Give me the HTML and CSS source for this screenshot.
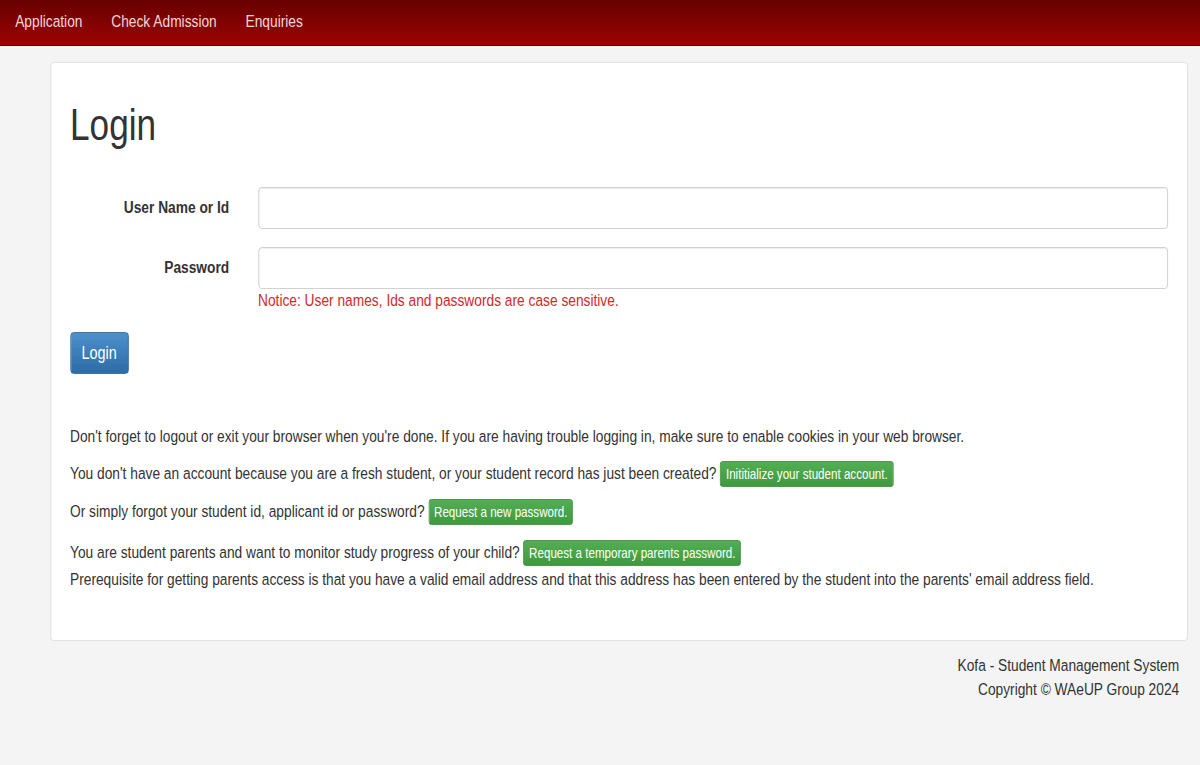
FILE: index.html
```html
<!DOCTYPE html>
<html>
<head>
<meta charset="utf-8">
<link rel="stylesheet" href="styles.css">
</head>
<body>
<div class="frame">
<div class="stage">
<nav class="topnav">
  <a class="nav-item" href="#">Application</a>
  <a class="nav-item" href="#">Check Admission</a>
  <a class="nav-item" href="#">Enquiries</a>
</nav>
<main class="panel">
  <h1 class="title">Login</h1>
  <form class="form">
    <div class="row">
      <label class="label">User Name or Id</label>
      <div class="field"><input class="input" type="text"></div>
    </div>
    <div class="row last">
      <label class="label">Password</label>
      <div class="field">
        <input class="input" type="password">
        <div class="notice">Notice: User names, Ids and passwords are case sensitive.</div>
      </div>
    </div>
    <button class="btn-login" type="button">Login</button>
  </form>
  <div class="info">
    <p class="line">Don't forget to logout or exit your browser when you're done. If you are having trouble logging in, make sure to enable cookies in your web browser.</p>
    <p class="line">You don't have an account because you are a fresh student, or your student record has just been created? <a class="btn-green" href="#">Inititialize your student account.</a></p>
    <p class="line wide">Or simply forgot your student id, applicant id or password? <a class="btn-green" href="#">Request a new password.</a></p>
    <p class="line">You are student parents and want to monitor study progress of your child? <a class="btn-green" href="#">Request a temporary parents password.</a><br>Prerequisite for getting parents access is that you have a valid email address and that this address has been entered by the student into the parents' email address field.</p>
  </div>
</main>
<footer class="footer">
  <div>Kofa - Student Management System</div>
  <div>Copyright © WAeUP Group 2024</div>
</footer>
</div>
</div>
</body>
</html>
```
FILE: styles.css
```css
* { box-sizing: border-box; }
html, body { margin: 0; padding: 0; }
body {
  background: #f4f4f4;
  font-family: "Liberation Sans", Arial, sans-serif;
  color: #333;
  width: 1200px;
  height: 765px;
  overflow: hidden;
}
.frame {
  width: 1200px;
  height: 765px;
  overflow: hidden;
}
/* the reference is rendered horizontally condensed */
.stage {
  width: 1500px;
  transform: scaleX(0.8);
  transform-origin: 0 0;
  font-size: 17.2px;
}
.topnav {
  height: 46px;
  background: linear-gradient(#680000, #9c0404);
  display: flex;
  align-items: center;
  padding-left: 19px;
  gap: 36px;
  border-bottom: 1px solid #6a0000;
}
.nav-item {
  color: #f2d6d6;
  text-decoration: none;
  font-size: 17.2px;
  padding-bottom: 2px;
}
.panel {
  margin: 16px 15px 0 62.5px;
  background: #fff;
  border: 1px solid #dcdcdc;
  border-radius: 4px;
  padding: 38px 24px 48px 24px;
}
.title {
  margin: 0;
  font-weight: normal;
  font-size: 44px;
  line-height: 48px;
  color: #333;
}
.form { margin-top: 38px; }
.row {
  display: flex;
  align-items: flex-start;
  margin-bottom: 18px;
}
.row.last { margin-bottom: 0; }
.label {
  width: 199px;
  text-align: right;
  font-weight: bold;
  font-size: 17.2px;
  line-height: 41px;
  color: #333;
  flex: none;
}
.field { margin-left: 36px; flex: 1; }
.input {
  display: block;
  width: 100%;
  height: 42px;
  border: 1px solid #ccc;
  border-radius: 4px;
  box-shadow: inset 0 1px 1px rgba(0,0,0,0.075);
  font-size: 17px;
}
.notice {
  color: #cf2a2c;
  font-size: 17.2px;
  margin-top: 1px;
  line-height: 20px;
}
.btn-login {
  margin-top: 22px;
  width: 73px;
  height: 42px;
  border: 1px solid #2b669a;
  border-radius: 4px;
  background: linear-gradient(#4c90cc, #2d6ca6);
  color: #fff;
  font-family: inherit;
  font-size: 18px;
  padding: 0;
}
.info { margin-top: 49px; }
.line {
  margin: 0 0 11px 0;
  line-height: 26px;
}
.line.wide { margin-bottom: 14px; }
.line:last-child { margin-bottom: 0; }
.btn-green {
  display: inline-block;
  background: linear-gradient(#53ae53, #3f9a3f);
  border: 1px solid #3a8d3a;
  border-radius: 3px;
  color: #fff;
  text-decoration: none;
  font-size: 14.5px;
  line-height: 24px;
  padding: 0 6px;
  vertical-align: baseline;
}
.footer {
  text-align: right;
  padding-right: 26px;
  margin-top: 12px;
  font-size: 17.2px;
  line-height: 24px;
  color: #333;
}
```
